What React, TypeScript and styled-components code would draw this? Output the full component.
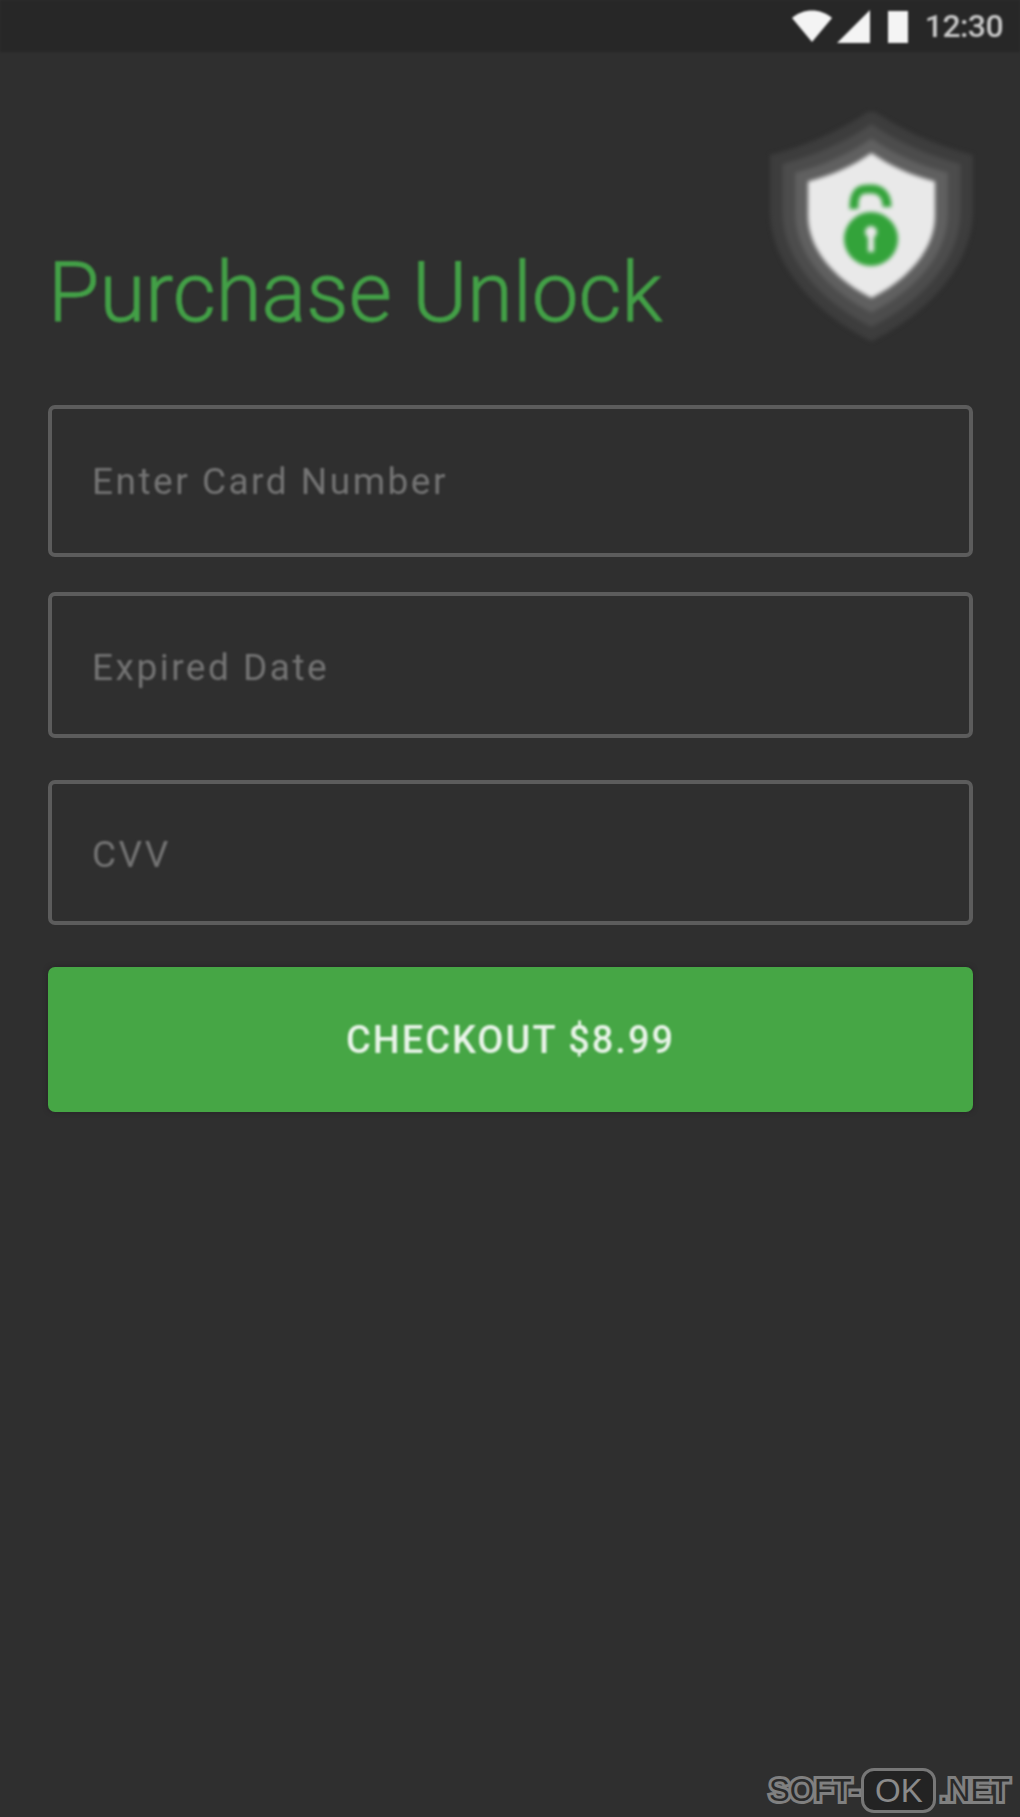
import React, { FC } from 'react';
import styled, { createGlobalStyle } from 'styled-components';

const GlobalStyle = createGlobalStyle`
    html, body {
        margin: 0;
        padding: 0;
        background: #2f2f2f;
    }
`;

const Screen = styled.div`
    position: relative;
    width: 1020px;
    height: 1817px;
    overflow: hidden;
    background: #2f2f2f;
    font-family: Roboto, 'Liberation Sans', sans-serif;
`;

const StatusBar = styled.div`
    display: flex;
    align-items: center;
    justify-content: flex-end;
    height: 52px;
    padding-right: 17px;
    box-sizing: border-box;
    background: #272727;
    filter: blur(1px);
`;

const StatusIcon = styled.svg<{ $left: number }>`
    display: block;
    margin-left: ${(p) => p.$left}px;
    fill: #f4f4f4;
`;

const StatusTime = styled.span`
    margin-left: 16px;
    font-size: 32px;
    font-weight: 500;
    letter-spacing: -0.6px;
    color: #c8c8c8;
`;

const Content = styled.div`
    padding: 60px 47px 0 48px;
`;

const Header = styled.div`
    display: flex;
    align-items: flex-end;
    justify-content: space-between;
    margin-bottom: 62px;
`;

const Title = styled.h1`
    margin: 0 0 8px 0;
    font-size: 83.5px;
    line-height: 84px;
    font-weight: 300;
    color: #43a047;
    -webkit-text-stroke: 0.8px #43a047;
    filter: blur(0.9px);
`;

const Field = styled.div<{ $height: number; $gap: number; $shift: number }>`
    display: flex;
    align-items: center;
    box-sizing: border-box;
    height: ${(p) => p.$height}px;
    margin-bottom: ${(p) => p.$gap}px;
    padding-left: 40px;
    padding-top: ${(p) => p.$shift}px;
    border: 4px solid #5c5c5c;
    border-radius: 7px;
`;

const Placeholder = styled.span`
    font-size: 37px;
    letter-spacing: 2.5px;
    color: #747474;
    filter: blur(1.1px);
`;

const CheckoutButton = styled.button`
    display: block;
    width: 100%;
    height: 145px;
    border: none;
    border-radius: 7px;
    background: #46a645;
    box-shadow: 0 0 5px #262226;
    font-family: inherit;
    font-size: 38px;
    font-weight: 500;
    letter-spacing: 2px;
    color: #e9f4e9;
`;

const ButtonLabel = styled.span`
    display: block;
    filter: blur(0.9px);
`;

const Watermark = styled.div`
    position: absolute;
    right: 10px;
    bottom: 4px;
    display: flex;
    align-items: center;
    font-family: 'Liberation Sans', Arial, sans-serif;
    font-size: 31px;
`;

const OutlinedText = styled.span`
    color: #2a2a2a;
    -webkit-text-stroke: 6px #808080;
    paint-order: stroke fill;
`;

const OkBadge = styled.span`
    display: flex;
    align-items: center;
    justify-content: center;
    box-sizing: border-box;
    width: 75px;
    height: 45px;
    margin: 0 3px 0 1px;
    border: 3px solid #777777;
    border-radius: 13px;
    background: #232323;
    color: #8a8a8a;
    font-size: 33px;
`;

const SHIELD_PATH =
    'M0 -72.5 C18 -60 40 -50 63.5 -44 L63.5 -10 C63.5 25 35 55 0 72.5 C-35 55 -63.5 25 -63.5 -10 L-63.5 -44 C-40 -50 -18 -60 0 -72.5 Z';

const ShieldLogo: FC = () => (
    <svg width='205' height='231' viewBox='0 0 205 231' style={{ filter: 'blur(2px)' }}>
        <g transform='translate(103.5 113.5)'>
            <path d={SHIELD_PATH} fill='#3d3d3d' transform='scale(1.6)' />
            <path d={SHIELD_PATH} fill='#4c4c4c' transform='scale(1.4)' />
            <path d={SHIELD_PATH} fill='#606060' transform='scale(1.2)' />
            <path d={SHIELD_PATH} fill='#e9e9e9' />
        </g>
        <path d='M86 97 C85 76 95 77 103 77 C113 77 119 83 119 95' fill='none' stroke='#33a33a' strokeWidth='9' />
        <circle cx='103' cy='127' r='27' fill='#33a33a' />
        <circle cx='103' cy='120' r='6' fill='#e9e9e9' />
        <rect x='100' y='120' width='6' height='20' fill='#e9e9e9' />
    </svg>
);

const App: FC = () => {
    return (
        <Screen>
            <GlobalStyle />
            <StatusBar>
                <StatusIcon $left={0} width='40' height='32' viewBox='0 0 40 32'>
                    <path d='M0 8 C11 -2 29 -2 40 8 L20 32 Z' />
                </StatusIcon>
                <StatusIcon $left={5} width='33' height='33' viewBox='0 0 33 33'>
                    <path d='M33 0 V33 H0 Z' />
                </StatusIcon>
                <StatusIcon $left={17} width='22' height='33' viewBox='0 0 22 33'>
                    <path d='M1 1 H21 V33 H1 Z' />
                </StatusIcon>
                <StatusTime>12:30</StatusTime>
            </StatusBar>
            <Content>
                <Header>
                    <Title>Purchase Unlock</Title>
                    <ShieldLogo />
                </Header>
                <Field $height={152} $gap={35} $shift={0}>
                    <Placeholder>Enter Card Number</Placeholder>
                </Field>
                <Field $height={146} $gap={42} $shift={4}>
                    <Placeholder>Expired Date</Placeholder>
                </Field>
                <Field $height={145} $gap={42} $shift={4}>
                    <Placeholder>CVV</Placeholder>
                </Field>
                <CheckoutButton>
                    <ButtonLabel>CHECKOUT $8.99</ButtonLabel>
                </CheckoutButton>
            </Content>
            <Watermark>
                <OutlinedText>SOFT-</OutlinedText>
                <OkBadge>OK</OkBadge>
                <OutlinedText>.NET</OutlinedText>
            </Watermark>
        </Screen>
    );
};

export default App;
